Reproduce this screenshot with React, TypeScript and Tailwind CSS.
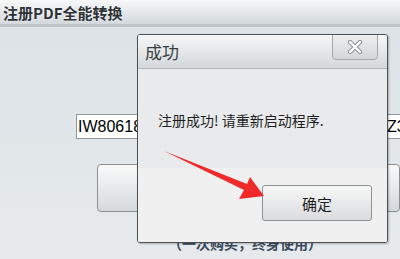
export default function App() {
  return (
    <div className="relative w-[400px] h-[259px] overflow-hidden bg-gradient-to-b from-[#dce2e6] to-[#e6eaed] font-['Noto_Sans_CJK_SC',sans-serif]">
      {/* window title */}
      <div className="h-[27px] flex items-center pl-[3px] bg-gradient-to-b from-[#f7f8f9] to-[#d2d8dc] border-b-[3px] border-[#bcc4c9]">
        <span className="text-[15px] font-bold leading-none text-[#2e3236] [text-shadow:0_0_2px_#fff]">注册PDF全能转换</span>
      </div>

      {/* background form */}
      <div className="flex flex-col pt-[87px]">
        <div className="ml-[76px] w-[340px] h-[25px] grid grid-cols-[310px_1fr] items-center bg-white border border-[#8e969c] text-[16px] leading-none text-black font-['Liberation_Sans',sans-serif]">
          <span className="pl-[1px]">IW80618</span>
          <span>Z3K</span>
        </div>
        <div className="flex gap-[20px] ml-[97px] mt-[25px]">
          <div className="w-[180px] h-[48px] rounded-[4px] border border-[#8a9095] bg-gradient-to-b from-[#fafafa] to-[#d5d9dc]" />
          <div className="w-[180px] h-[48px] rounded-[4px] border border-[#8a9095] bg-gradient-to-b from-[#fafafa] to-[#d5d9dc]" />
        </div>
        <div className="mt-[24px] ml-[168px] text-[14px] font-bold leading-none text-[#394a5c]">（一次购买，终身使用）</div>
      </div>

      {/* dialog */}
      <div className="absolute left-[137px] top-[34px] w-[251px] h-[209px] flex flex-col border border-[#4d5256] rounded-[3px] overflow-hidden shadow-[1px_1px_2px_rgba(0,0,0,0.25)]">
        <div className="relative h-[34px] shrink-0 flex items-center pl-[7px] bg-gradient-to-b from-[#f6f7f8] to-[#d4d8db] border-b border-[#b5babe]">
          <span className="text-[17px] leading-none text-[#3a3d40]">成功</span>
          <div className="absolute right-[9px] top-[-1px] w-[46px] h-[26px] flex items-center justify-center rounded-b-[4px] border border-[#a4a9ad] bg-gradient-to-b from-[#eceef0] to-[#d3d7da]">
            <svg width="16" height="14" viewBox="0 0 16 14">
              <path d="M3 2 L13 12 M13 2 L3 12" stroke="#8e9499" strokeWidth="4.4" strokeLinecap="round" />
              <path d="M3 2 L13 12 M13 2 L3 12" stroke="#ffffff" strokeWidth="2.4" strokeLinecap="round" />
            </svg>
          </div>
        </div>
        <div className="h-[99px] shrink-0 flex items-center pl-[20px] pt-[3px] bg-[#e8eaeb]">
          <span className="text-[14px] leading-none text-[#1e1e1e]">注册成功! 请重新启动程序.</span>
        </div>
        <div className="flex-1 flex justify-end pt-[17px] pr-[15px] bg-[#f0f0f0]">
          <div className="w-[110px] h-[36px] flex items-center justify-center rounded-[3px] border border-[#8c9196] bg-gradient-to-b from-[#f7f7f7] to-[#dadcde]">
            <span className="text-[15px] leading-none text-[#1e1e1e]">确定</span>
          </div>
        </div>
      </div>

      {/* red arrow annotation */}
      <svg className="absolute left-0 top-0" width="400" height="259" viewBox="0 0 400 259">
        <polygon points="164,151 247,184 250,177 264,196 239,199 244,190" fill="#ef2a2a" />
      </svg>
    </div>
  );
}
